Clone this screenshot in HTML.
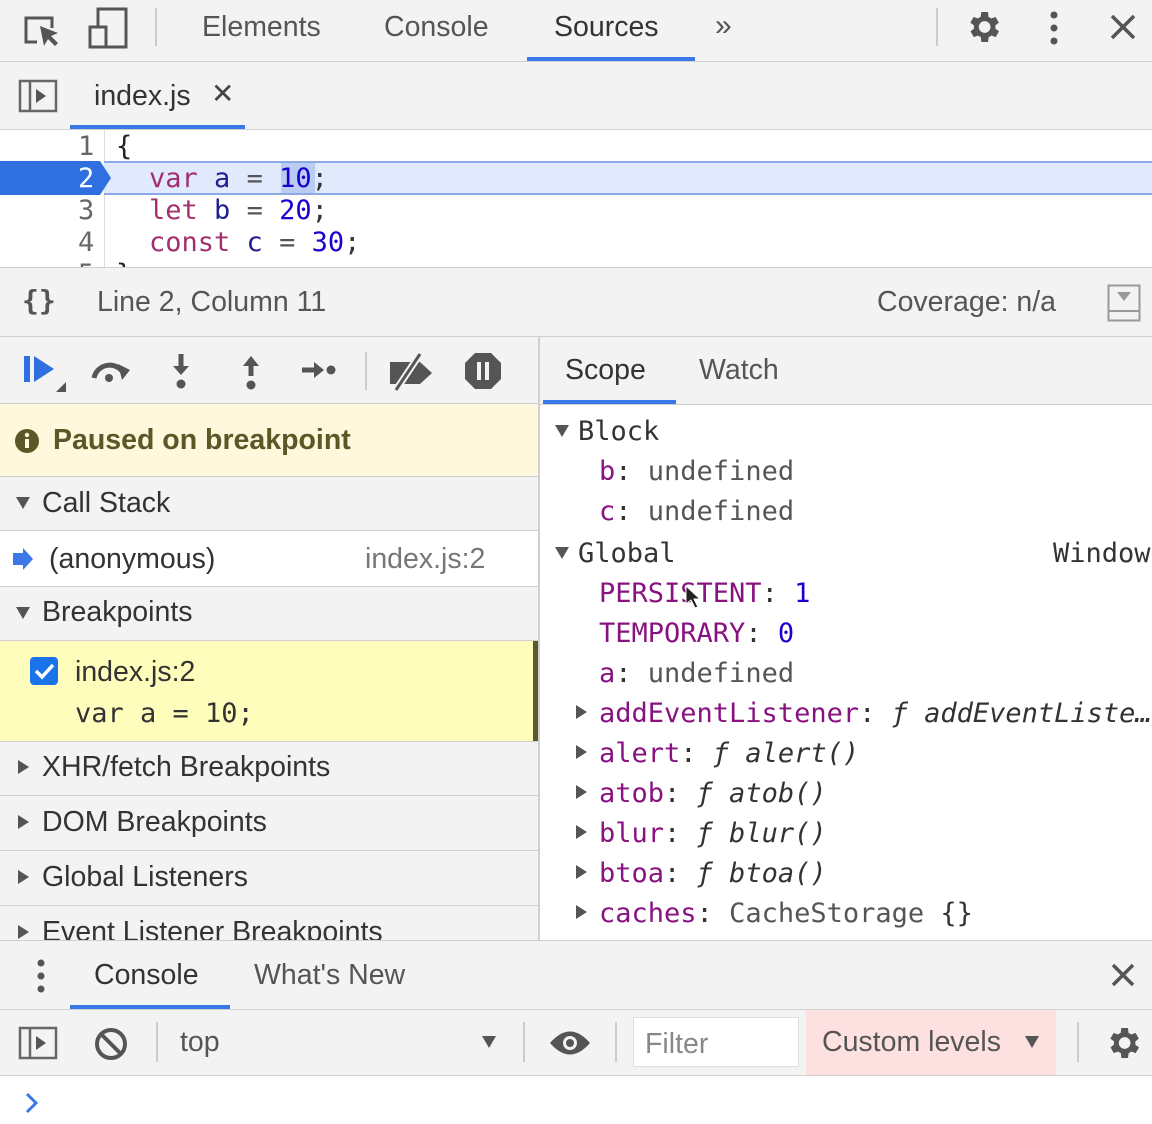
<!DOCTYPE html>
<html><head><meta charset="utf-8"><style>
*{margin:0;padding:0;box-sizing:border-box}
body{width:1152px;height:1124px;overflow:hidden;background:#f3f3f3;position:relative;font-family:"Liberation Sans",sans-serif;color:#333;font-size:28.5px}
.a{position:absolute}
.t{position:absolute;white-space:nowrap;line-height:1}
.m{font-family:"DejaVu Sans Mono","Liberation Mono",monospace;font-size:27px}
.hl{position:absolute;left:0;height:1px;background:#d0d0d0}
.kw{color:#aa0d91}.kw2{color:#a3306e}.num{color:#1c00cf}.var{color:#202090}
.prop{color:#881280}.gr{color:#555}
.tri{display:block;width:0;height:0;border-left:7px solid transparent;border-right:7px solid transparent;border-top:12px solid #555}
.trr{display:block;width:0;height:0;border-top:7px solid transparent;border-bottom:7px solid transparent;border-left:11px solid #555}
</style></head><body>
<div class="a" style="left:0;top:0;width:1152px;height:61px;background:#f3f3f3"></div>
<svg class="a" style="top:8px;left:20px" width="44" height="42" viewBox="0 0 44 42"><path d="M17 34H6V10h26v10" fill="none" stroke="#555" stroke-width="3"/><path d="M20 18l4 20 4-7 7 7 3-3-7-7 7-3z" fill="#555"/></svg>
<svg class="a" style="left:86px;top:7px" width="44" height="42" viewBox="0 0 44 42"><rect x="12" y="2" width="28" height="38" fill="none" stroke="#555" stroke-width="3"/><rect x="4" y="20" width="16" height="20" fill="#f3f3f3" stroke="#555" stroke-width="3"/></svg>
<div class="a" style="left:155px;top:8px;width:2px;height:38px;background:#ccc"></div>
<div class="t" style="left:202px;top:13px;color:#555">Elements</div>
<div class="t" style="left:384px;top:13px;color:#555">Console</div>
<div class="t" style="left:554px;top:13px;color:#333">Sources</div>
<div class="a" style="left:527px;top:57px;width:168px;height:4px;background:#3b78e7"></div>
<div class="t" style="left:715px;top:11px;color:#555;font-size:30px">»</div>
<div class="a" style="left:936px;top:8px;width:2px;height:38px;background:#ccc"></div>
<svg class="a" style="left:963px;top:7px" width="40" height="40" viewBox="0 0 24 24"><path fill="#555" d="M19.4 13a7.5 7.5 0 000-2l2.1-1.6-2-3.5-2.5 1a7 7 0 00-1.7-1L15 3h-4l-.4 2.9a7 7 0 00-1.7 1l-2.5-1-2 3.5L6.6 11a7.5 7.5 0 000 2l-2.1 1.6 2 3.5 2.5-1a7 7 0 001.7 1L11 21h4l.4-2.9a7 7 0 001.7-1l2.5 1 2-3.5zM13 15.5a3.5 3.5 0 110-7 3.5 3.5 0 010 7z"/></svg>
<svg class="a" style="left:1044px;top:10px" width="20" height="36"><circle cx="10" cy="5" r="3.5" fill="#555"/><circle cx="10" cy="18" r="3.5" fill="#555"/><circle cx="10" cy="31" r="3.5" fill="#555"/></svg>
<svg class="a" style="left:1108px;top:12px" width="30" height="30"><path d="M4 4L26 26M26 4L4 26" stroke="#555" stroke-width="3.5"/></svg>
<div class="hl" style="top:61px;width:1152px"></div>
<svg class="a" style="left:18px;top:79px" width="40" height="34"><rect x="2" y="2" width="36" height="30" fill="none" stroke="#666" stroke-width="2.5"/><line x1="12" y1="2" x2="12" y2="32" stroke="#666" stroke-width="2.5"/><path d="M18 10l10 7-10 7z" fill="#555"/></svg>
<div class="t" style="left:94px;top:82px;color:#333">index.js</div>
<div class="t" style="left:211px;top:80px;color:#444;font-size:28px">✕</div>
<div class="a" style="left:70px;top:125px;width:175px;height:4px;background:#3b78e7"></div>
<div class="hl" style="top:129px;width:1152px"></div>
<div class="a" style="left:0;top:130px;width:1152px;height:137px;background:#fff;overflow:hidden">
  <div class="a" style="left:104px;top:0;width:1px;height:137px;background:#ddd"></div>
  <div class="a" style="left:104px;top:31px;width:1048px;height:34px;background:#e0eafc;border-top:2px solid #8aa9e6;border-bottom:2px solid #8aa9e6"></div>
  <svg class="a" style="left:0;top:31px" width="112" height="34"><path d="M0 0H100L111 17L100 34H0z" fill="#2f6fe0"/></svg>
  <div class="t m" style="left:78px;top:3px;color:#666">1</div>
  <div class="t m" style="left:78px;top:35px;color:#fff">2</div>
  <div class="t m" style="left:78px;top:67px;color:#666">3</div>
  <div class="t m" style="left:78px;top:99px;color:#666">4</div>
  <div class="t m" style="left:78px;top:131px;color:#666">5</div>
  <div class="t m" style="left:116px;top:3px;color:#222">{</div>
  <div class="a" style="left:281px;top:33px;width:34px;height:30px;background:#b9cdf3"></div>
  <div class="t m" style="left:149px;top:35px"><span class="kw2">var</span> <span class="var">a</span> <span class="gr">=</span> <span class="num">10</span>;</div>
  <div class="t m" style="left:149px;top:67px"><span class="kw2">let</span> <span class="var">b</span> <span class="gr">=</span> <span class="num">20</span>;</div>
  <div class="t m" style="left:149px;top:99px"><span class="kw2">const</span> <span class="var">c</span> <span class="gr">=</span> <span class="num">30</span>;</div>
  <div class="t m" style="left:116px;top:131px;color:#222">}</div>
</div>
<div class="hl" style="top:267px;width:1152px"></div>
<div class="t m" style="left:22px;top:287px;color:#555;font-weight:bold;font-size:28px">{}</div>
<div class="t" style="left:97px;top:288px;color:#555">Line 2, Column 11</div>
<div class="t" style="left:877px;top:288px;color:#555">Coverage: n/a</div>
<svg class="a" style="left:1107px;top:284px" width="34" height="38"><rect x="1.5" y="1.5" width="31" height="35" fill="none" stroke="#999" stroke-width="2"/><line x1="1.5" y1="27" x2="32" y2="27" stroke="#999" stroke-width="2"/><path d="M10 8h14l-7 9z" fill="#999"/></svg>
<div class="hl" style="top:336px;width:1152px"></div>
<div class="a" style="left:538px;top:337px;width:2px;height:603px;background:#d0d0d0"></div>
<svg class="a" style="left:20px;top:352px" width="50" height="42"><rect x="4" y="4" width="6" height="26" fill="#2f6fe0"/><path d="M14 4l20 13-20 13z" fill="#2f6fe0"/><path d="M46 30v10h-10z" fill="#555"/></svg>
<svg class="a" style="left:88px;top:354px" width="46" height="34"><path d="M6 24a16 16 0 0130-4" fill="none" stroke="#555" stroke-width="5"/><path d="M30 10l12 6-8 10z" fill="#555"/><circle cx="21" cy="24" r="4" fill="#555"/></svg>
<svg class="a" style="left:168px;top:352px" width="26" height="40"><path d="M13 2v14" stroke="#555" stroke-width="5"/><path d="M5 14h16l-8 9z" fill="#555"/><circle cx="13" cy="32" r="4.5" fill="#555"/></svg>
<svg class="a" style="left:238px;top:352px" width="26" height="40"><path d="M13 14v10" stroke="#555" stroke-width="5"/><path d="M5 14h16l-8-10z" fill="#555"/><circle cx="13" cy="33" r="4.5" fill="#555"/></svg>
<svg class="a" style="left:300px;top:357px" width="40" height="26"><path d="M2 13h14" stroke="#555" stroke-width="5"/><path d="M14 5v16l10-8z" fill="#555"/><circle cx="31" cy="13" r="4.5" fill="#555"/></svg>
<div class="a" style="left:365px;top:352px;width:2px;height:38px;background:#ccc"></div>
<svg class="a" style="left:386px;top:350px" width="50" height="44"><path d="M4 12h30l12 11-12 11H4z" fill="#555"/><path d="M10 40L34 4" stroke="#f3f3f3" stroke-width="7"/><path d="M10 40L34 4" stroke="#555" stroke-width="3"/></svg>
<svg class="a" style="left:462px;top:350px" width="42" height="42"><path d="M13 3h16l10 10v16L29 39H13L3 29V13z" fill="#555"/><rect x="15" y="12" width="4" height="18" fill="#f3f3f3"/><rect x="23" y="12" width="4" height="18" fill="#f3f3f3"/></svg>
<div class="hl" style="top:403px;width:538px"></div>
<div class="a" style="left:0;top:404px;width:538px;height:72px;background:#fef8dc"></div>
<svg class="a" style="left:13px;top:427px" width="28" height="28"><circle cx="14" cy="14" r="12" fill="#5c5726"/><rect x="12" y="12" width="4" height="9" fill="#fef8dc"/><circle cx="14" cy="8" r="2.2" fill="#fef8dc"/></svg>
<div class="t" style="left:53px;top:426px;color:#5c5726;font-weight:bold">Paused on breakpoint</div>
<div class="hl" style="top:476px;width:538px"></div>
<div class="t" style="left:16px;top:497px"><span class="tri"></span></div>
<div class="t" style="left:42px;top:489px;color:#333">Call Stack</div>
<div class="hl" style="top:530px;width:538px"></div>
<div class="a" style="left:0;top:531px;width:538px;height:55px;background:#fff"></div>
<svg class="a" style="left:11px;top:547px" width="24" height="24"><path d="M2 6h10V1l10 11-10 11v-5H2z" fill="#3b78e7"/></svg>
<div class="t" style="left:49px;top:545px;color:#333">(anonymous)</div>
<div class="t" style="left:365px;top:545px;color:#777">index.js:2</div>
<div class="hl" style="top:586px;width:538px"></div>
<div class="t" style="left:16px;top:607px"><span class="tri"></span></div>
<div class="t" style="left:42px;top:598px;color:#333">Breakpoints</div>
<div class="hl" style="top:640px;width:538px"></div>
<div class="a" style="left:0;top:641px;width:538px;height:100px;background:#fefdbb"></div>
<div class="a" style="left:533px;top:641px;width:5px;height:100px;background:#5b5a2c"></div>
<svg class="a" style="left:29px;top:656px" width="30" height="30"><rect x="1" y="1" width="28" height="28" rx="4" fill="#1a73e8"/><path d="M7 15l6 6 11-12" fill="none" stroke="#fff" stroke-width="3.5"/></svg>
<div class="t" style="left:75px;top:658px;color:#333">index.js:2</div>
<div class="t m" style="left:75px;top:700px;color:#333">var a = 10;</div>
<div class="hl" style="top:741px;width:538px"></div>
<div class="t" style="left:18px;top:760px"><span class="trr"></span></div>
<div class="t" style="left:42px;top:753px">XHR/fetch Breakpoints</div>
<div class="hl" style="top:795px;width:538px"></div>
<div class="t" style="left:18px;top:815px"><span class="trr"></span></div>
<div class="t" style="left:42px;top:808px">DOM Breakpoints</div>
<div class="hl" style="top:850px;width:538px"></div>
<div class="t" style="left:18px;top:870px"><span class="trr"></span></div>
<div class="t" style="left:42px;top:863px">Global Listeners</div>
<div class="hl" style="top:905px;width:538px"></div>
<div class="a" style="left:0;top:906px;width:538px;height:34px;overflow:hidden">
<div class="t" style="left:18px;top:19px"><span class="trr"></span></div>
<div class="t" style="left:42px;top:12px">Event Listener Breakpoints</div></div>
<div class="t" style="left:565px;top:356px;color:#333">Scope</div>
<div class="t" style="left:699px;top:356px;color:#555">Watch</div>
<div class="a" style="left:543px;top:400px;width:133px;height:4px;background:#3b78e7"></div>
<div class="hl" style="top:404px;left:540px;width:612px"></div>
<div class="a m" style="left:540px;top:405px;width:612px;height:535px;background:#fff;overflow:hidden">
  <div class="t" style="left:15px;top:20px"><span class="tri"></span></div>
  <div class="t" style="left:38px;top:13px;color:#333">Block</div>
  <div class="t" style="left:59px;top:53px"><span class="prop">b</span>: <span class="gr">undefined</span></div>
  <div class="t" style="left:59px;top:93px"><span class="prop">c</span>: <span class="gr">undefined</span></div>
  <div class="t" style="left:15px;top:142px"><span class="tri"></span></div>
  <div class="t" style="left:38px;top:135px;color:#333">Global</div>
  <div class="t" style="left:513px;top:135px;color:#333">Window</div>
  <div class="t" style="left:59px;top:175px"><span class="prop">PERSISTENT</span>: <span class="num">1</span></div>
  <div class="t" style="left:59px;top:215px"><span class="prop">TEMPORARY</span>: <span class="num">0</span></div>
  <div class="t" style="left:59px;top:255px"><span class="prop">a</span>: <span class="gr">undefined</span></div>
  <div class="t" style="left:36px;top:300px"><span class="trr"></span></div>
  <div class="t" style="left:59px;top:295px"><span class="prop">addEventListener</span>: <i>ƒ addEventListe…</i></div>
  <div class="t" style="left:36px;top:340px"><span class="trr"></span></div>
  <div class="t" style="left:59px;top:335px"><span class="prop">alert</span>: <i>ƒ alert()</i></div>
  <div class="t" style="left:36px;top:380px"><span class="trr"></span></div>
  <div class="t" style="left:59px;top:375px"><span class="prop">atob</span>: <i>ƒ atob()</i></div>
  <div class="t" style="left:36px;top:420px"><span class="trr"></span></div>
  <div class="t" style="left:59px;top:415px"><span class="prop">blur</span>: <i>ƒ blur()</i></div>
  <div class="t" style="left:36px;top:460px"><span class="trr"></span></div>
  <div class="t" style="left:59px;top:455px"><span class="prop">btoa</span>: <i>ƒ btoa()</i></div>
  <div class="t" style="left:36px;top:500px"><span class="trr"></span></div>
  <div class="t" style="left:59px;top:495px"><span class="prop">caches</span>: <span class="gr">CacheStorage</span> {}</div>
</div>
<svg class="a" style="left:684px;top:584px" width="16" height="26"><path d="M2 2v18l5-4 4 8 3-1-4-8h6z" fill="#222" stroke="#fff" stroke-width="1"/></svg>
<div class="hl" style="top:940px;width:1152px"></div>
<svg class="a" style="left:32px;top:958px" width="18" height="36"><circle cx="9" cy="5" r="3.5" fill="#555"/><circle cx="9" cy="18" r="3.5" fill="#555"/><circle cx="9" cy="31" r="3.5" fill="#555"/></svg>
<div class="t" style="left:94px;top:961px;color:#333">Console</div>
<div class="t" style="left:254px;top:961px;color:#555">What's New</div>
<svg class="a" style="left:1110px;top:962px" width="26" height="26"><path d="M3 3L23 23M23 3L3 23" stroke="#555" stroke-width="3.5"/></svg>
<div class="a" style="left:70px;top:1005px;width:160px;height:4px;background:#3b78e7"></div>
<div class="hl" style="top:1009px;width:1152px"></div>
<svg class="a" style="left:18px;top:1026px" width="40" height="34"><rect x="2" y="2" width="36" height="30" fill="none" stroke="#666" stroke-width="2.5"/><line x1="12" y1="2" x2="12" y2="32" stroke="#666" stroke-width="2.5"/><path d="M18 10l10 7-10 7z" fill="#555"/></svg>
<svg class="a" style="left:93px;top:1026px" width="36" height="36"><circle cx="18" cy="18" r="14" fill="none" stroke="#555" stroke-width="4"/><path d="M8 8L28 28" stroke="#555" stroke-width="4"/></svg>
<div class="a" style="left:156px;top:1022px;width:2px;height:40px;background:#ccc"></div>
<div class="t" style="left:180px;top:1028px;color:#555">top</div>
<div class="t" style="left:482px;top:1036px"><span class="tri"></span></div>
<div class="a" style="left:523px;top:1022px;width:2px;height:40px;background:#ccc"></div>
<svg class="a" style="left:548px;top:1028px" width="44" height="30"><path d="M2 15Q22-8 42 15Q22 38 2 15z" fill="#555"/><circle cx="22" cy="15" r="7" fill="#f3f3f3"/><circle cx="22" cy="15" r="4" fill="#555"/></svg>
<div class="a" style="left:615px;top:1022px;width:2px;height:40px;background:#ccc"></div>
<div class="a" style="left:633px;top:1017px;width:166px;height:50px;background:#fff;border:1px solid #ddd"></div>
<div class="t" style="left:645px;top:1030px;color:#888">Filter</div>
<div class="a" style="left:806px;top:1010px;width:250px;height:65px;background:#fde1e1"></div>
<div class="t" style="left:822px;top:1028px;color:#555">Custom levels</div>
<div class="t" style="left:1025px;top:1036px"><span class="tri"></span></div>
<div class="a" style="left:1077px;top:1022px;width:2px;height:40px;background:#ccc"></div>
<svg class="a" style="left:1103px;top:1023px" width="40" height="40" viewBox="0 0 24 24"><path fill="#555" d="M19.4 13a7.5 7.5 0 000-2l2.1-1.6-2-3.5-2.5 1a7 7 0 00-1.7-1L15 3h-4l-.4 2.9a7 7 0 00-1.7 1l-2.5-1-2 3.5L6.6 11a7.5 7.5 0 000 2l-2.1 1.6 2 3.5 2.5-1a7 7 0 001.7 1L11 21h4l.4-2.9a7 7 0 001.7-1l2.5 1 2-3.5zM13 15.5a3.5 3.5 0 110-7 3.5 3.5 0 010 7z"/></svg>
<div class="hl" style="top:1075px;width:1152px"></div>
<div class="a" style="left:0;top:1076px;width:1152px;height:48px;background:#fff"></div>
<svg class="a" style="left:24px;top:1092px" width="16" height="22"><path d="M3 2l9 9-9 9" fill="none" stroke="#3b78e7" stroke-width="3"/></svg>
</body></html>
